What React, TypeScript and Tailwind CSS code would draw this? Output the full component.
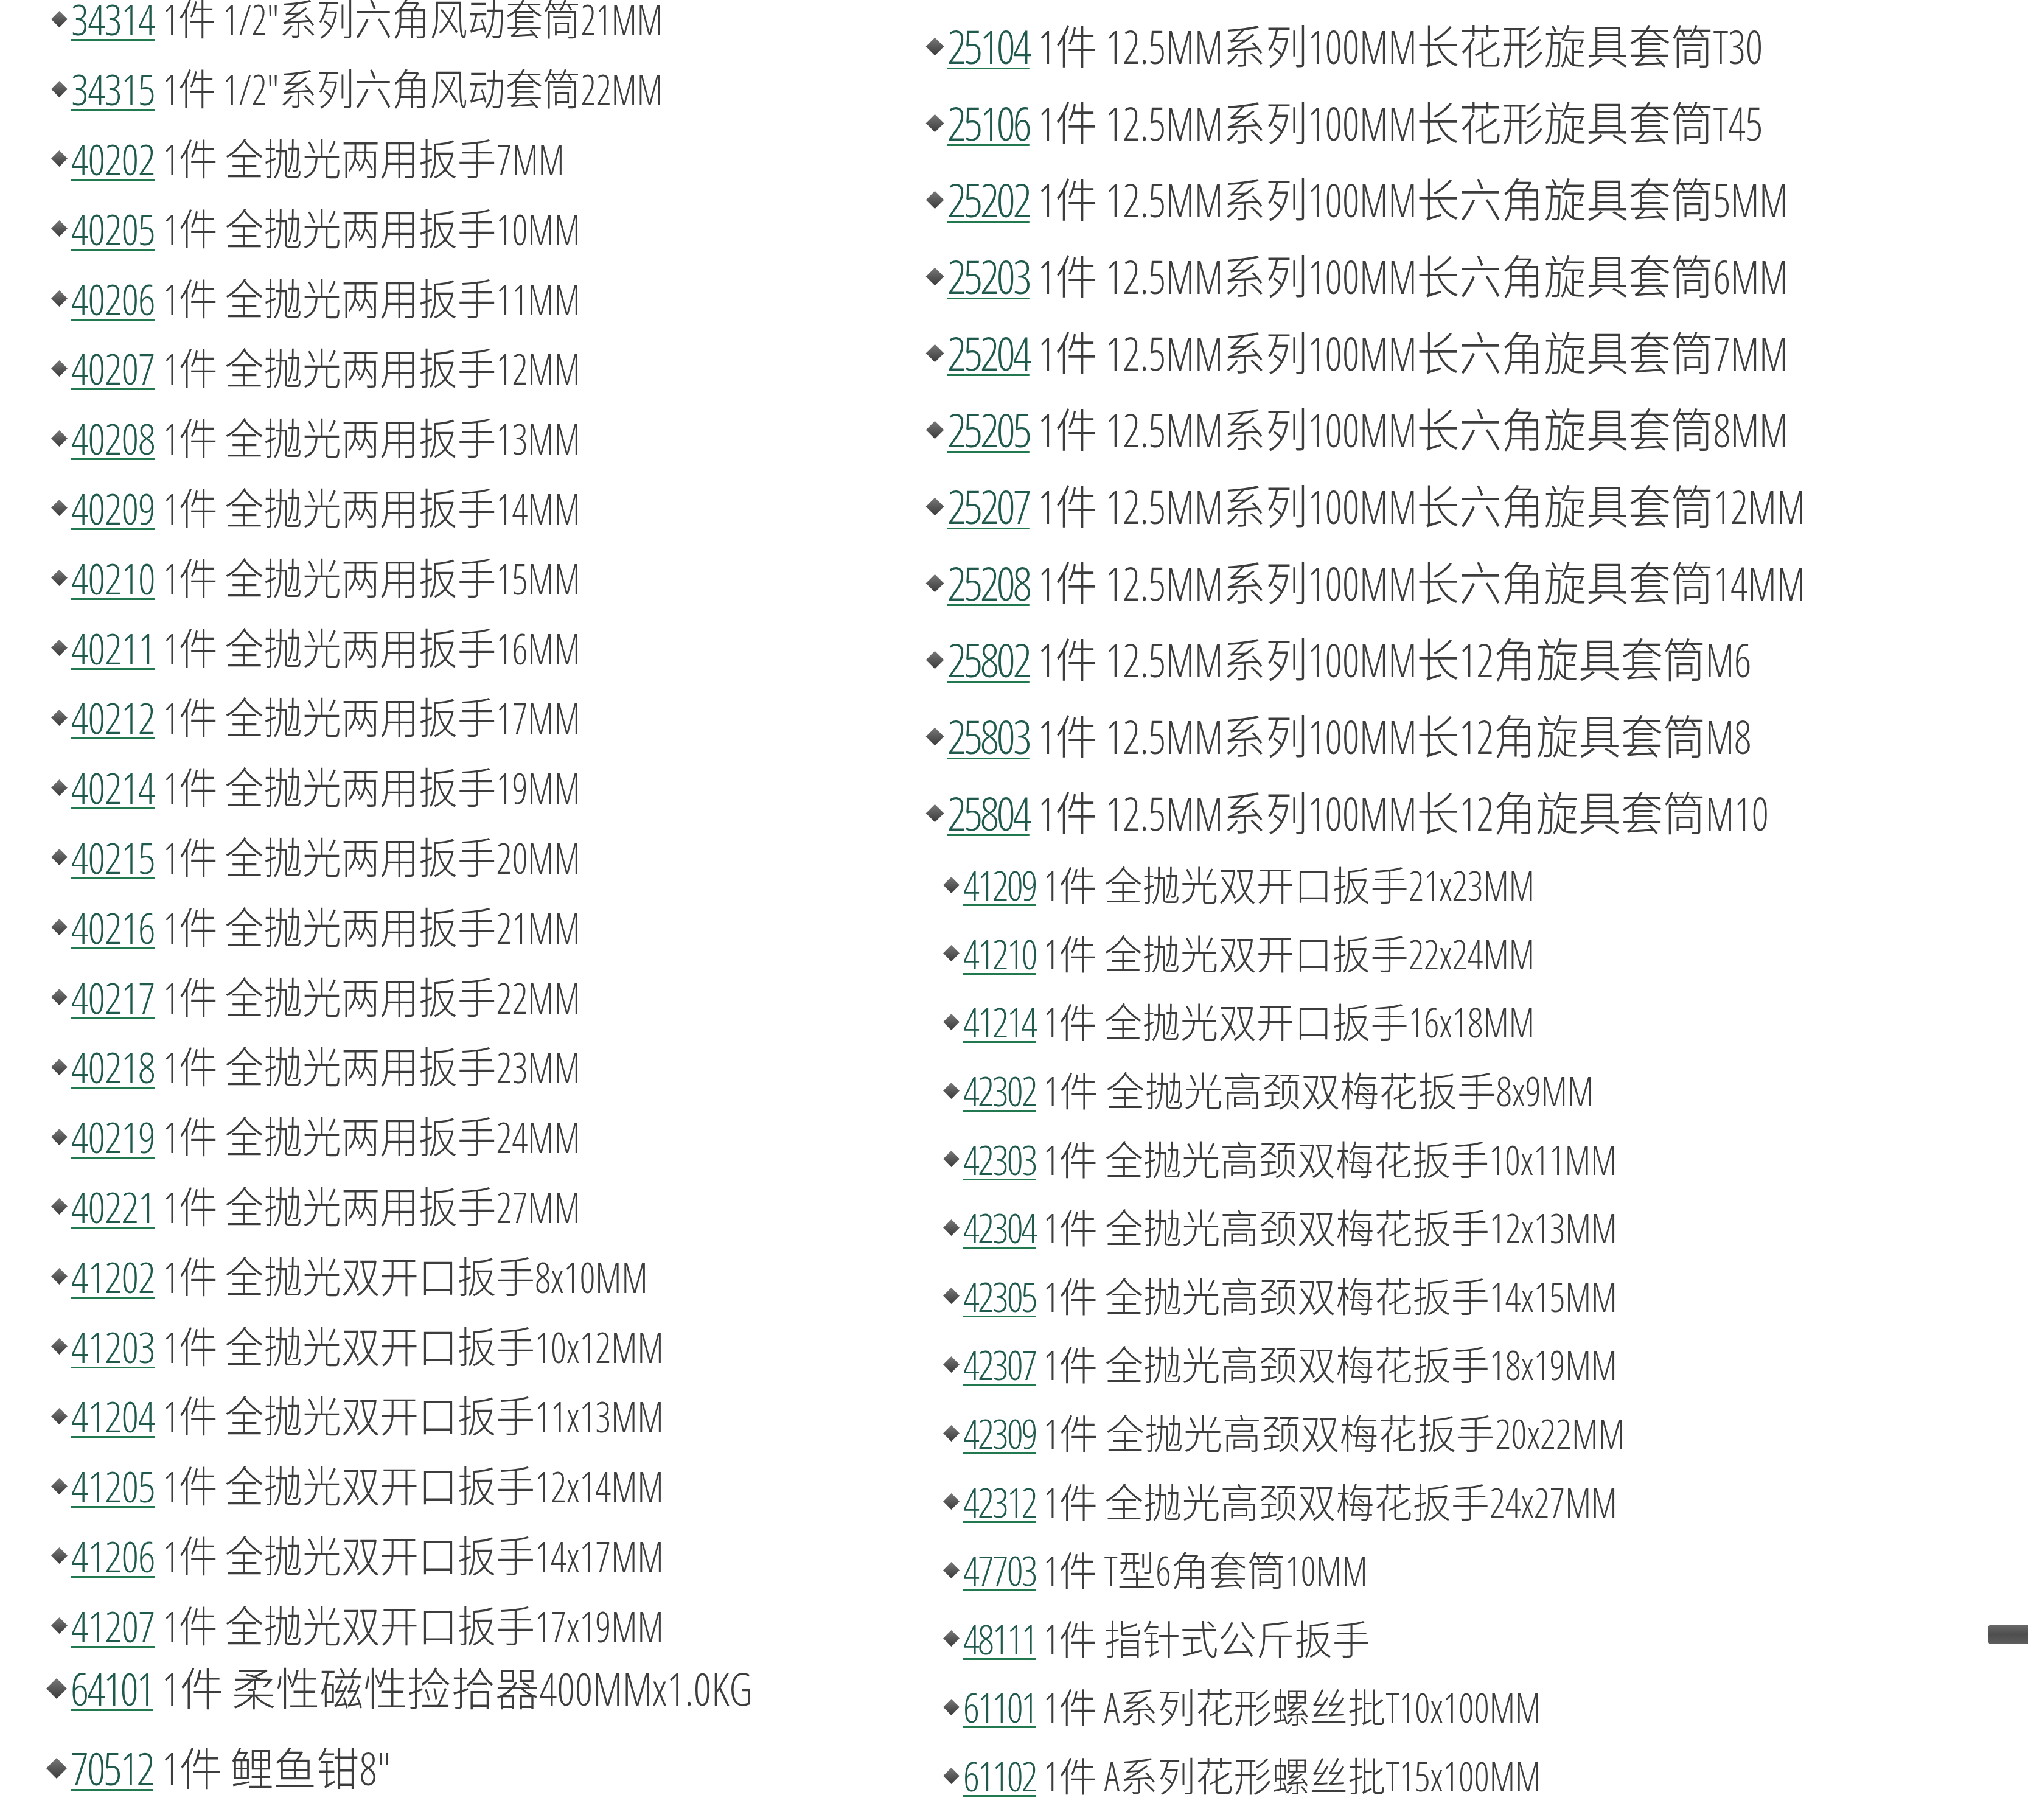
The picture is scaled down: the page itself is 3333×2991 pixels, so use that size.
import React from "react";

type Item = { num: string; text: string; scale?: string };

const leftMain: Item[] = [
  { num: "34314", text: "1件 1/2\"系列六角风动套筒21MM", scale: "scale-x-[0.885]" },
  { num: "34315", text: "1件 1/2\"系列六角风动套筒22MM", scale: "scale-x-[0.885]" },
  { num: "40202", text: "1件 全抛光两用扳手7MM" },
  { num: "40205", text: "1件 全抛光两用扳手10MM" },
  { num: "40206", text: "1件 全抛光两用扳手11MM" },
  { num: "40207", text: "1件 全抛光两用扳手12MM" },
  { num: "40208", text: "1件 全抛光两用扳手13MM" },
  { num: "40209", text: "1件 全抛光两用扳手14MM" },
  { num: "40210", text: "1件 全抛光两用扳手15MM" },
  { num: "40211", text: "1件 全抛光两用扳手16MM" },
  { num: "40212", text: "1件 全抛光两用扳手17MM" },
  { num: "40214", text: "1件 全抛光两用扳手19MM" },
  { num: "40215", text: "1件 全抛光两用扳手20MM" },
  { num: "40216", text: "1件 全抛光两用扳手21MM" },
  { num: "40217", text: "1件 全抛光两用扳手22MM" },
  { num: "40218", text: "1件 全抛光两用扳手23MM" },
  { num: "40219", text: "1件 全抛光两用扳手24MM" },
  { num: "40221", text: "1件 全抛光两用扳手27MM" },
  { num: "41202", text: "1件 全抛光双开口扳手8x10MM" },
  { num: "41203", text: "1件 全抛光双开口扳手10x12MM" },
  { num: "41204", text: "1件 全抛光双开口扳手11x13MM" },
  { num: "41205", text: "1件 全抛光双开口扳手12x14MM" },
  { num: "41206", text: "1件 全抛光双开口扳手14x17MM" },
  { num: "41207", text: "1件 全抛光双开口扳手17x19MM" },
];

const groupA: Item[] = [
  { num: "25104", text: "1件 12.5MM系列100MM长花形旋具套筒T30" },
  { num: "25106", text: "1件 12.5MM系列100MM长花形旋具套筒T45" },
  { num: "25202", text: "1件 12.5MM系列100MM长六角旋具套筒5MM" },
  { num: "25203", text: "1件 12.5MM系列100MM长六角旋具套筒6MM" },
  { num: "25204", text: "1件 12.5MM系列100MM长六角旋具套筒7MM" },
  { num: "25205", text: "1件 12.5MM系列100MM长六角旋具套筒8MM" },
  { num: "25207", text: "1件 12.5MM系列100MM长六角旋具套筒12MM" },
  { num: "25208", text: "1件 12.5MM系列100MM长六角旋具套筒14MM" },
  { num: "25802", text: "1件 12.5MM系列100MM长12角旋具套筒M6" },
  { num: "25803", text: "1件 12.5MM系列100MM长12角旋具套筒M8" },
  { num: "25804", text: "1件 12.5MM系列100MM长12角旋具套筒M10" },
];

const groupB: Item[] = [
  { num: "41209", text: "1件 全抛光双开口扳手21x23MM" },
  { num: "41210", text: "1件 全抛光双开口扳手22x24MM" },
  { num: "41214", text: "1件 全抛光双开口扳手16x18MM" },
  { num: "42302", text: "1件 全抛光高颈双梅花扳手8x9MM", scale: "scale-x-[0.972]" },
  { num: "42303", text: "1件 全抛光高颈双梅花扳手10x11MM", scale: "scale-x-[0.957]" },
  { num: "42304", text: "1件 全抛光高颈双梅花扳手12x13MM", scale: "scale-x-[0.958]" },
  { num: "42305", text: "1件 全抛光高颈双梅花扳手14x15MM", scale: "scale-x-[0.958]" },
  { num: "42307", text: "1件 全抛光高颈双梅花扳手18x19MM", scale: "scale-x-[0.958]" },
  { num: "42309", text: "1件 全抛光高颈双梅花扳手20x22MM", scale: "scale-x-[0.97]" },
  { num: "42312", text: "1件 全抛光高颈双梅花扳手24x27MM", scale: "scale-x-[0.958]" },
  { num: "47703", text: "1件 T型6角套筒10MM" },
  { num: "48111", text: "1件 指针式公斤扳手" },
  { num: "61101", text: "1件 A系列花形螺丝批T10x100MM" },
  { num: "61102", text: "1件 A系列花形螺丝批T15x100MM" },
];

const FONT =
  "font-['Open_Sans','Noto_Sans_CJK_SC',sans-serif] font-stretch-[75%] font-light whitespace-nowrap leading-none";

type Style = { size: string; track: string; scale: string; diamond: string };

const S_LEFT: Style = {
  size: "text-[70px]",
  track: "tracking-[-1px]",
  scale: "scale-x-[0.91]",
  diamond: "w-[19px] h-[19px] mx-[4px]",
};
const S_LEFT_BIG: Style = {
  size: "text-[74px]",
  track: "tracking-[-3px]",
  scale: "scale-x-[0.955]",
  diamond: "w-[24px] h-[24px] mx-[5px]",
};
const S_A: Style = {
  size: "text-[76px]",
  track: "tracking-[-4px]",
  scale: "scale-x-[0.916]",
  diamond: "w-[21px] h-[21px] mx-[4px]",
};
const S_B: Style = {
  size: "text-[66px]",
  track: "tracking-[-3px]",
  scale: "scale-x-[0.947]",
  diamond: "w-[19px] h-[19px] mx-[4px]",
};

function Row({ item, rowClass, s }: { item: Item; rowClass: string; s: Style }) {
  return (
    <div className={rowClass}>
      <span
        className={`block ${s.diamond} rotate-45 shrink-0 bg-gradient-to-br from-[#7a7a7a] to-[#3a3a3a]`}
      />
      <span className={`${FONT} ${s.size} ml-[6px]`}>
        <span
          className={`${s.track} text-[#1f5a4c] underline decoration-[#22784f] decoration-[3px] underline-offset-[6px]`}
        >
          {item.num}
        </span>{" "}
        <span className={`inline-block origin-left ${item.scale ?? s.scale}`}>{item.text}</span>
      </span>
    </div>
  );
}

export default function App() {
  return (
    <div className="relative w-[3333px] h-[2991px] overflow-hidden bg-white text-[#3d3d3d]">
      <div className="flex">
        {/* left column */}
        <div className="w-[1440px] pl-[84px] mt-[-26px] flex flex-col">
          {leftMain.map((it) => (
            <Row key={it.num} item={it} rowClass="h-[114.8px] flex items-center" s={S_LEFT} />
          ))}
          <Row
            item={{
              num: "64101",
              text: "1件 柔性磁性捡拾器400MMx1.0KG",
              scale: "scale-x-[0.975]",
            }}
            rowClass="h-[92px] flex items-center ml-[-8px]"
            s={S_LEFT_BIG}
          />
          <Row
            item={{ num: "70512", text: "1件 鲤鱼钳8\"" }}
            rowClass="h-[170px] flex items-center ml-[-8px]"
            s={S_LEFT_BIG}
          />
        </div>
        {/* right column */}
        <div className="flex flex-col pt-[13px]">
          <div className="flex flex-col pl-[82px]">
            {groupA.map((it) => (
              <Row key={it.num} item={it} rowClass="h-[126px] flex items-center" s={S_A} />
            ))}
          </div>
          <div className="flex flex-col pl-[110px] mt-[-1px]">
            {groupB.map((it) => (
              <Row key={it.num} item={it} rowClass="h-[112.6px] flex items-center" s={S_B} />
            ))}
          </div>
        </div>
      </div>
      {/* partial handle at the right edge */}
      <div className="absolute right-0 top-[2670px] w-[66px] h-[32px] rounded-l-[6px] bg-gradient-to-b from-[#6a6a6a] via-[#4e4e4e] to-[#5e5e5e]" />
    </div>
  );
}
